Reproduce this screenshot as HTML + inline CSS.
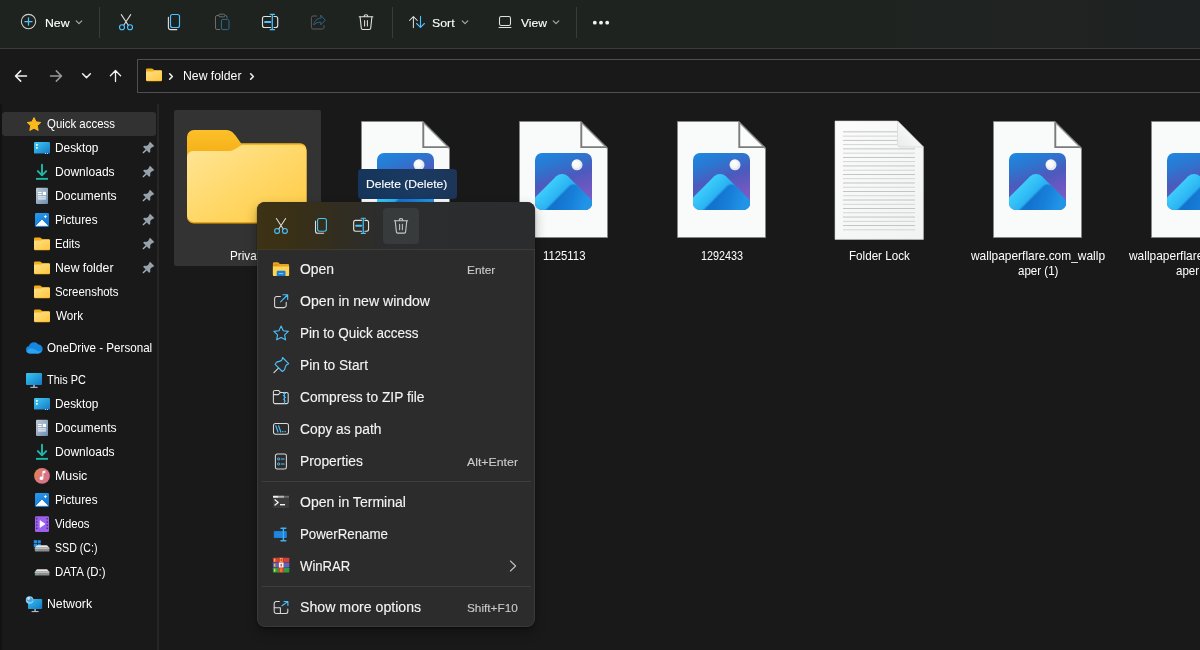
<!DOCTYPE html>
<html lang="en"><head><meta charset="utf-8"><title>New folder</title>
<style>
html,body{margin:0;padding:0}
body{width:1200px;height:650px;overflow:hidden;background:#191919;position:relative;font-family:"Liberation Sans",sans-serif;font-size:12px;color:#fff}
.g{display:contents}
.a,.t,svg{position:absolute}
.t{white-space:nowrap;line-height:20px;height:20px;transform-origin:0 50%}
svg{overflow:visible}
#toolbar{left:0;top:0;width:1200px;height:48px;background:linear-gradient(90deg,#1f2320 0%,#1f2320 70%,#1f2222 100%)}
#tbline{left:0;top:48px;width:1200px;height:1px;background:#3b3b3b}
.vsep{width:1px;top:7px;height:31px;background:#383b39}
#addr{left:137px;top:59px;width:1100px;height:32px;border:1px solid #4f4f4f;background:#191919}
#side{left:0;top:100px;width:158px;height:550px;background:#191919}
#sdiv{left:157px;top:104px;width:2px;height:546px;background:#262626}
#qa{left:2px;top:112px;width:154px;height:24px;background:#323232;border-radius:3px}
#ledge{left:0;top:104px;width:2px;height:546px;background:#121212}
#sel{left:174px;top:110px;width:147px;height:156px;background:#333;border-radius:2px}
#menu{left:257px;top:202px;width:278px;height:425px;border-radius:8px;background:#2c2c2c;box-shadow:0 0 0 1px rgba(255,255,255,.07) inset,0 5px 12px rgba(0,0,0,.3),0 1px 2px rgba(0,0,0,.45);overflow:hidden}
#mtop{left:0;top:0;width:278px;height:47px;background:linear-gradient(90deg,#3d3214 0%,#3a3016 12%,#312d21 30%,#2b2d2e 46%,#2b2c2d 100%)}
.msep{left:5px;width:269px;height:1px;background:#3e3e3e}
#delbtn{left:126px;top:6px;width:36px;height:36px;border-radius:4px;background:#383b3c}
#tip{left:358px;top:169px;width:99px;height:30px;border-radius:4px;background:linear-gradient(90deg,#16355a,#1a3a62 60%,#1c3558)}
#w{position:absolute;left:0;top:0;width:1200px;height:650px;will-change:transform}
</style></head><body><div id="w">

<header class="g" id="commandbar" aria-label="Command bar">
<div class="a" id="toolbar"></div><div class="a" id="tbline"></div>
<div class="g" role="button" aria-label="New"><svg class="a" style="left:16px;top:9px" width="24" height="24" viewBox="0 0 24 24"><g transform="translate(12.5 12.5)"><circle cx="0" cy="0" r="7.15" fill="none" stroke="#d2d2d2" stroke-width="1.05"/><path d="M-3.6 0 H3.6 M0 -3.6 V3.6" fill="none" stroke="#4cc2ff" stroke-width="1.25" stroke-linecap="round" stroke-linejoin="round" stroke-linecap="butt"/></g></svg><span class="t" id="t0" style="left:44.63px;top:12.80px;font-size:11.5px;color:#fff;transform:scaleX(1.0671);-webkit-text-stroke:0.12px currentColor;">New</span><svg class="a" style="left:71px;top:14px" width="16" height="16" viewBox="0 0 16 16"><g transform="translate(8 8.3)"><path d="M-2.8 -1.4 L0 1.4 L2.8 -1.4" fill="none" stroke="#a8a8a8" stroke-width="1.2" stroke-linecap="round" stroke-linejoin="round" /></g></svg></div>
<div class="a vsep" style="left:99px"></div>
<div class="g" role="button" aria-label="Cut"><svg class="a" style="left:114px;top:10px" width="24" height="24" viewBox="0 0 24 24"><g transform="translate(12 12)"><path d="M-4.7 -7.4 L2.3 3.2 M4.7 -7.4 L-2.3 3.2" fill="none" stroke="#dcdcdc" stroke-width="1.1" stroke-linecap="round" stroke-linejoin="round" /><circle cx="-4" cy="5.2" r="2.5" fill="none" stroke="#4cc2ff" stroke-width="1.15"/><circle cx="4" cy="5.2" r="2.5" fill="none" stroke="#4cc2ff" stroke-width="1.15"/></g></svg></div>
<div class="g" role="button" aria-label="Copy"><svg class="a" style="left:162px;top:10px" width="24" height="24" viewBox="0 0 24 24"><g transform="translate(12 12)"><path d="M-5.6 -4.8 V5.2 A2.4 2.4 0 0 0 -3.2 7.6 H2.8" fill="none" stroke="#e0e0e0" stroke-width="1.1" stroke-linecap="round" stroke-linejoin="round" /><rect x="-3.5" y="-7.5" width="9" height="13" rx="2" fill="none" stroke="#4cc2ff" stroke-width="1.15"/></g></svg></div>
<div class="g" role="button" aria-label="Paste" aria-disabled="true"><svg class="a" style="left:210px;top:10px" width="24" height="24" viewBox="0 0 24 24"><g transform="translate(12 12)"><path d="M-3.2 -6.5 H-5 A1.5 1.5 0 0 0 -6.5 -5 V6 A1.5 1.5 0 0 0 -5 7.5 H-2.2 M3.2 -6.5 H3.5 A1.5 1.5 0 0 1 5 -5 V-4" fill="none" stroke="#6b6b6b" stroke-width="1" stroke-linecap="round" stroke-linejoin="round" /><rect x="-3.4" y="-7.8" width="6.4" height="2.6" rx="1.3" fill="none" stroke="#6b6b6b" stroke-width="1"/><rect x="-0.6" y="-2.6" width="7.6" height="10.2" rx="1.5" fill="none" stroke="#2b6d96" stroke-width="1"/></g></svg></div>
<div class="g" role="button" aria-label="Rename"><svg class="a" style="left:258px;top:10px" width="24" height="24" viewBox="0 0 24 24"><g transform="translate(12 12)"><path d="M0.6 -5.5 H-5.5 A2 2 0 0 0 -7.5 -3.5 V3.5 A2 2 0 0 0 -5.5 5.5 H0.6 M4 -5.5 H5.7 A2 2 0 0 1 7.7 -3.5 V3.5 A2 2 0 0 1 5.7 5.5 H4" fill="none" stroke="#e0e0e0" stroke-width="1.15" stroke-linecap="round" stroke-linejoin="round" /><path d="M-5 0 H0.4" fill="none" stroke="#4cc2ff" stroke-width="1.9" stroke-linecap="round" stroke-linejoin="round" stroke-linecap="butt"/><path d="M2.3 -7.6 V7.6 M0.2 -7.7 H4.5 M0.2 7.7 H4.5" fill="none" stroke="#4cc2ff" stroke-width="1.25" stroke-linecap="round" stroke-linejoin="round" /></g></svg></div>
<div class="g" role="button" aria-label="Share" aria-disabled="true"><svg class="a" style="left:306px;top:10px" width="24" height="24" viewBox="0 0 24 24"><g transform="translate(12 12)"><path d="M-1.4 -6 H-5 A1.6 1.6 0 0 0 -6.6 -4.4 V5.4 A1.6 1.6 0 0 0 -5 7 H4.4 A1.6 1.6 0 0 0 6 5.4 V3.6" fill="none" stroke="#5c5c5c" stroke-width="1" stroke-linecap="round" stroke-linejoin="round" /><path d="M2.8 -6.6 L7.3 -1.8 L2.8 2.8 V0.2 C-0.8 0 -2.8 1.2 -4.2 3 C-3.8 -0.8 -1.4 -3.6 2.8 -4 Z" fill="none" stroke="#2a648c" stroke-width="1" stroke-linecap="round" stroke-linejoin="round" /></g></svg></div>
<div class="g" role="button" aria-label="Delete"><svg class="a" style="left:354px;top:10px" width="24" height="24" viewBox="0 0 24 24"><g transform="translate(12 12)"><path d="M-6.8 -5.2 H6.8 M-1.9 -5.4 A1.9 1.9 0 0 1 1.9 -5.4" fill="none" stroke="#e0e0e0" stroke-width="1.1" stroke-linecap="round" stroke-linejoin="round" /><path d="M-5.9 -5 L-4.7 6.2 A1.4 1.4 0 0 0 -3.3 7.5 H3.3 A1.4 1.4 0 0 0 4.7 6.2 L5.9 -5" fill="none" stroke="#e0e0e0" stroke-width="1.1" stroke-linecap="round" stroke-linejoin="round" /><path d="M-1.4 -1.6 V4 M1.4 -1.6 V4" fill="none" stroke="#e0e0e0" stroke-width="1.05" stroke-linecap="round" stroke-linejoin="round" /></g></svg></div>
<div class="a vsep" style="left:392px"></div>
<div class="g" role="button" aria-label="Sort"><svg class="a" style="left:405px;top:10px" width="24" height="24" viewBox="0 0 24 24"><g transform="translate(12 12)"><path d="M-3.6 5.6 V-5.2 M-7.5 -1.5 L-3.6 -5.4 L0.3 -1.5" fill="none" stroke="#dcdcdc" stroke-width="1.05" stroke-linecap="round" stroke-linejoin="round" /><path d="M3.5 -5.6 V5.2 M-0.4 1.5 L3.5 5.4 L7.4 1.5" fill="none" stroke="#4cc2ff" stroke-width="1.1" stroke-linecap="round" stroke-linejoin="round" /></g></svg><span class="t" id="t1" style="left:432.21px;top:12.80px;font-size:11.5px;color:#fff;transform:scaleX(1.0732);-webkit-text-stroke:0.12px currentColor;">Sort</span><svg class="a" style="left:457px;top:14px" width="16" height="16" viewBox="0 0 16 16"><g transform="translate(8 8.3)"><path d="M-2.8 -1.4 L0 1.4 L2.8 -1.4" fill="none" stroke="#a8a8a8" stroke-width="1.2" stroke-linecap="round" stroke-linejoin="round" /></g></svg></div>
<div class="g" role="button" aria-label="View"><svg class="a" style="left:493px;top:10px" width="24" height="24" viewBox="0 0 24 24"><g transform="translate(12 12)"><rect x="-5.5" y="-5.5" width="11" height="9" rx="1.8" fill="none" stroke="#e2e2e2" stroke-width="1.05"/><path d="M-6 5.5 H6" fill="none" stroke="#e2e2e2" stroke-width="1.05" stroke-linecap="round" stroke-linejoin="round" stroke-linecap="butt"/></g></svg><span class="t" id="t2" style="left:520.79px;top:12.80px;font-size:11.5px;color:#fff;transform:scaleX(1.0531);-webkit-text-stroke:0.12px currentColor;">View</span><svg class="a" style="left:548px;top:14px" width="16" height="16" viewBox="0 0 16 16"><g transform="translate(8 8.3)"><path d="M-2.8 -1.4 L0 1.4 L2.8 -1.4" fill="none" stroke="#a8a8a8" stroke-width="1.2" stroke-linecap="round" stroke-linejoin="round" /></g></svg></div>
<div class="a vsep" style="left:576px"></div>
<div class="g" role="button" aria-label="See more"><svg class="a" style="left:589px;top:10px" width="24" height="24" viewBox="0 0 24 24"><g transform="translate(12 12.7)"><circle cx="-6.2" cy="0" r="1.9" fill="#f4f4f4"/><circle cx="0" cy="0" r="1.9" fill="#f4f4f4"/><circle cx="6.2" cy="0" r="1.9" fill="#f4f4f4"/></g></svg></div>
</header>
<div class="g" id="navrow">
<div class="g" role="button" aria-label="Back"><svg class="a" style="left:9px;top:64px" width="24" height="24" viewBox="0 0 24 24"><g transform="translate(12 12)"><path d="M5.5 0 H-5.2 M-0.3 -5.1 L-5.5 0 L-0.3 5.1" fill="none" stroke="#f2f2f2" stroke-width="1.5" stroke-linecap="round" stroke-linejoin="round" /></g></svg></div>
<div class="g" role="button" aria-label="Forward" aria-disabled="true"><svg class="a" style="left:44px;top:64px" width="24" height="24" viewBox="0 0 24 24"><g transform="translate(12 12)"><path d="M-5.5 0 H5.2 M0.3 -5.1 L5.5 0 L0.3 5.1" fill="none" stroke="#9a9a9a" stroke-width="1.5" stroke-linecap="round" stroke-linejoin="round" /></g></svg></div>
<div class="g" role="button" aria-label="Recent locations"><svg class="a" style="left:78px;top:67px" width="16" height="16" viewBox="0 0 16 16"><g transform="translate(8.5 8.7)"><path d="M-3.9 -1.95 L0 1.95 L3.9 -1.95" fill="none" stroke="#ececec" stroke-width="1.5" stroke-linecap="round" stroke-linejoin="round" /></g></svg></div>
<div class="g" role="button" aria-label="Up"><svg class="a" style="left:103px;top:64px" width="24" height="24" viewBox="0 0 24 24"><g transform="translate(12.5 12)"><path d="M0 5.6 V-5.2 M-5.1 -0.3 L0 -5.5 L5.1 -0.3" fill="none" stroke="#f2f2f2" stroke-width="1.3" stroke-linecap="round" stroke-linejoin="round" /></g></svg></div>
<div class="a" id="addr"></div>
<div class="g" id="breadcrumb">
<svg class="a" style="left:146px;top:68px" width="16" height="14" viewBox="0 0 16 14"><defs><linearGradient id="fgFs_1" x1="0" y1="0" x2="1" y2="1"><stop offset="0" stop-color="#ffe08a"/><stop offset="1" stop-color="#ffc83d"/></linearGradient><linearGradient id="fgBs_1" x1="0" y1="0" x2="0" y2="1"><stop offset="0" stop-color="#fcbc19"/><stop offset="1" stop-color="#f0a90c"/></linearGradient></defs><path d="M0 1.6 A1.2 1.2 0 0 1 1.2 0.4 H5.6 C6.4 0.4 6.9 0.7 7.4 1.3 L8.1 2.2 H14.8 A1.2 1.2 0 0 1 16 3.4 V12 A1.2 1.2 0 0 1 14.8 13.2 H1.2 A1.2 1.2 0 0 1 0 12 Z" fill="#f2ad17"/><path d="M0 4.6 A1 1 0 0 1 1 3.6 H6.2 C6.9 3.6 7.3 3.4 7.8 2.9 L8.2 2.5 H14.9 A1.1 1.1 0 0 1 16 3.6 V11.6 A1.1 1.1 0 0 1 14.9 12.7 H1.1 A1.1 1.1 0 0 1 0 11.6 Z" fill="url(#fgFs_1)"/></svg>
<svg class="a" style="left:163px;top:68px" width="16" height="16" viewBox="0 0 16 16"><g transform="translate(8 8.5)"><path d="M-1.35 -2.7 L1.35 0 L-1.35 2.7" fill="none" stroke="#f0f0f0" stroke-width="1.6" stroke-linecap="round" stroke-linejoin="round" /></g></svg>
<span class="t" id="t3" style="left:182.78px;top:65.80px;font-size:13.0px;color:#fff;transform:scaleX(0.9411);">New folder</span>
<svg class="a" style="left:244px;top:68px" width="16" height="16" viewBox="0 0 16 16"><g transform="translate(8 8.5)"><path d="M-1.35 -2.7 L1.35 0 L-1.35 2.7" fill="none" stroke="#f0f0f0" stroke-width="1.6" stroke-linecap="round" stroke-linejoin="round" /></g></svg>
</div></div>
<nav class="g" id="sidebar" aria-label="Navigation pane">
<div class="a" id="sdiv"></div><div class="a" id="ledge"></div>
<div class="a" id="qa"></div>
<div class="g" role="treeitem" aria-level="1"><svg class="a" style="left:26px;top:116px" width="16" height="17" viewBox="0 0 16 17"><polygon points="8.00,1.60 10.06,5.87 14.75,6.51 11.33,9.78 12.17,14.44 8.00,12.20 3.83,14.44 4.67,9.78 1.25,6.51 5.94,5.87" fill="#fbb91b" stroke="#fbb91b" stroke-width="1" stroke-linejoin="round"/></svg><span class="t" id="t4" style="left:47.44px;top:113.80px;font-size:13.0px;color:#fff;transform:scaleX(0.8786);">Quick access</span></div>
<div class="g" role="treeitem" aria-level="2"><svg class="a" style="left:34px;top:140px" width="16" height="16" viewBox="0 0 16 16"><defs><linearGradient id="dg_3" x1="0" y1="0" x2="1" y2="1"><stop offset="0" stop-color="#3fcdf6"/><stop offset="1" stop-color="#1578c4"/></linearGradient></defs><rect x="0" y="2" width="16" height="11.6" rx="1.2" fill="url(#dg_3)"/><rect x="2" y="4" width="1.7" height="1.7" fill="#fff"/><rect x="2" y="7" width="1.7" height="1.7" fill="#fff"/><rect x="11" y="13" width="1" height="1" fill="#a8d8f0"/><rect x="13" y="13" width="1" height="1" fill="#a8d8f0"/></svg><span class="t" id="t5" style="left:54.58px;top:137.80px;font-size:13.0px;color:#fff;transform:scaleX(0.9103);">Desktop</span><svg class="a" style="left:142px;top:142px" width="13" height="14" viewBox="0 0 13 14"><g transform="rotate(45 6 6)"><path d="M3.2 0.2 H8.8 V1.6 L8.1 2.4 V5.2 L10.2 7.2 V8.5 H1.8 V7.2 L3.9 5.2 V2.4 L3.2 1.6 Z" fill="#98a2ae" stroke="#98a2ae" stroke-width="0.3" stroke-linejoin="round"/><path d="M5.3 8.4 H6.7 V12.8 L6 13.6 L5.3 12.8 Z" fill="#a8b0ba"/></g></svg></div>
<div class="g" role="treeitem" aria-level="2"><svg class="a" style="left:34px;top:164px" width="17" height="18" viewBox="0 0 17 18"><g transform="translate(0 0.1)"><path d="M8 0.6 V11 M3.8 7 L8 11.2 L12.2 7" fill="none" stroke="#1fb9a9" stroke-width="1.9" stroke-linecap="round" stroke-linejoin="round" stroke-linecap="butt" stroke-linejoin="miter"/><rect x="2" y="13.8" width="12" height="1.9" fill="#1fb9a9"/></g></svg><span class="t" id="t6" style="left:54.84px;top:161.80px;font-size:13.0px;color:#fff;transform:scaleX(0.9269);">Downloads</span><svg class="a" style="left:142px;top:166px" width="13" height="14" viewBox="0 0 13 14"><g transform="rotate(45 6 6)"><path d="M3.2 0.2 H8.8 V1.6 L8.1 2.4 V5.2 L10.2 7.2 V8.5 H1.8 V7.2 L3.9 5.2 V2.4 L3.2 1.6 Z" fill="#98a2ae" stroke="#98a2ae" stroke-width="0.3" stroke-linejoin="round"/><path d="M5.3 8.4 H6.7 V12.8 L6 13.6 L5.3 12.8 Z" fill="#a8b0ba"/></g></svg></div>
<div class="g" role="treeitem" aria-level="2"><svg class="a" style="left:34px;top:187px" width="17" height="18" viewBox="0 0 17 18"><g transform="translate(0 0.8)"><defs><linearGradient id="dcg_7" x1="0" y1="0" x2="1" y2="1"><stop offset="0" stop-color="#c3ccd6"/><stop offset="1" stop-color="#6a8db2"/></linearGradient></defs><rect x="2" y="0" width="12" height="16.2" rx="1" fill="url(#dcg_7)"/><rect x="4" y="4.2" width="3.6" height="1" fill="#fff"/><rect x="4" y="6.2" width="3.6" height="1" fill="#fff"/><rect x="8.8" y="4" width="3.2" height="3.2" fill="#fff"/><rect x="4" y="8.6" width="8" height="1" fill="#fff"/><rect x="4" y="10.6" width="8" height="1" fill="#fff"/></g></svg><span class="t" id="t7" style="left:54.84px;top:185.80px;font-size:13.0px;color:#fff;transform:scaleX(0.9388);">Documents</span><svg class="a" style="left:142px;top:190px" width="13" height="14" viewBox="0 0 13 14"><g transform="rotate(45 6 6)"><path d="M3.2 0.2 H8.8 V1.6 L8.1 2.4 V5.2 L10.2 7.2 V8.5 H1.8 V7.2 L3.9 5.2 V2.4 L3.2 1.6 Z" fill="#98a2ae" stroke="#98a2ae" stroke-width="0.3" stroke-linejoin="round"/><path d="M5.3 8.4 H6.7 V12.8 L6 13.6 L5.3 12.8 Z" fill="#a8b0ba"/></g></svg></div>
<div class="g" role="treeitem" aria-level="2"><svg class="a" style="left:34px;top:212px" width="16" height="16" viewBox="0 0 16 16"><defs><linearGradient id="pg_9" x1="0" y1="0" x2="0.6" y2="1"><stop offset="0" stop-color="#2a9df0"/><stop offset="1" stop-color="#1374cf"/></linearGradient></defs><rect x="1" y="1" width="14" height="14" rx="1.2" fill="url(#pg_9)"/><path d="M2.4 13.6 L8 8 L13.6 13.6 Z" fill="#fff" stroke="#fff" stroke-width="0.8" stroke-linejoin="round"/><path d="M11.4 2.8 L12 4 L13.2 4.6 L12 5.2 L11.4 6.4 L10.8 5.2 L9.6 4.6 L10.8 4 Z" fill="#fff"/></svg><span class="t" id="t8" style="left:54.78px;top:209.80px;font-size:13.0px;color:#fff;transform:scaleX(0.9053);">Pictures</span><svg class="a" style="left:142px;top:214px" width="13" height="14" viewBox="0 0 13 14"><g transform="rotate(45 6 6)"><path d="M3.2 0.2 H8.8 V1.6 L8.1 2.4 V5.2 L10.2 7.2 V8.5 H1.8 V7.2 L3.9 5.2 V2.4 L3.2 1.6 Z" fill="#98a2ae" stroke="#98a2ae" stroke-width="0.3" stroke-linejoin="round"/><path d="M5.3 8.4 H6.7 V12.8 L6 13.6 L5.3 12.8 Z" fill="#a8b0ba"/></g></svg></div>
<div class="g" role="treeitem" aria-level="2"><svg class="a" style="left:34px;top:237px" width="16" height="14" viewBox="0 0 16 14"><defs><linearGradient id="fgFs_11" x1="0" y1="0" x2="1" y2="1"><stop offset="0" stop-color="#ffe08a"/><stop offset="1" stop-color="#ffc83d"/></linearGradient><linearGradient id="fgBs_11" x1="0" y1="0" x2="0" y2="1"><stop offset="0" stop-color="#fcbc19"/><stop offset="1" stop-color="#f0a90c"/></linearGradient></defs><path d="M0 1.6 A1.2 1.2 0 0 1 1.2 0.4 H5.6 C6.4 0.4 6.9 0.7 7.4 1.3 L8.1 2.2 H14.8 A1.2 1.2 0 0 1 16 3.4 V12 A1.2 1.2 0 0 1 14.8 13.2 H1.2 A1.2 1.2 0 0 1 0 12 Z" fill="#f2ad17"/><path d="M0 4.6 A1 1 0 0 1 1 3.6 H6.2 C6.9 3.6 7.3 3.4 7.8 2.9 L8.2 2.5 H14.9 A1.1 1.1 0 0 1 16 3.6 V11.6 A1.1 1.1 0 0 1 14.9 12.7 H1.1 A1.1 1.1 0 0 1 0 11.6 Z" fill="url(#fgFs_11)"/></svg><span class="t" id="t9" style="left:54.78px;top:233.80px;font-size:13.0px;color:#fff;transform:scaleX(0.8707);">Edits</span><svg class="a" style="left:142px;top:238px" width="13" height="14" viewBox="0 0 13 14"><g transform="rotate(45 6 6)"><path d="M3.2 0.2 H8.8 V1.6 L8.1 2.4 V5.2 L10.2 7.2 V8.5 H1.8 V7.2 L3.9 5.2 V2.4 L3.2 1.6 Z" fill="#98a2ae" stroke="#98a2ae" stroke-width="0.3" stroke-linejoin="round"/><path d="M5.3 8.4 H6.7 V12.8 L6 13.6 L5.3 12.8 Z" fill="#a8b0ba"/></g></svg></div>
<div class="g" role="treeitem" aria-level="2"><svg class="a" style="left:34px;top:261px" width="16" height="14" viewBox="0 0 16 14"><defs><linearGradient id="fgFs_13" x1="0" y1="0" x2="1" y2="1"><stop offset="0" stop-color="#ffe08a"/><stop offset="1" stop-color="#ffc83d"/></linearGradient><linearGradient id="fgBs_13" x1="0" y1="0" x2="0" y2="1"><stop offset="0" stop-color="#fcbc19"/><stop offset="1" stop-color="#f0a90c"/></linearGradient></defs><path d="M0 1.6 A1.2 1.2 0 0 1 1.2 0.4 H5.6 C6.4 0.4 6.9 0.7 7.4 1.3 L8.1 2.2 H14.8 A1.2 1.2 0 0 1 16 3.4 V12 A1.2 1.2 0 0 1 14.8 13.2 H1.2 A1.2 1.2 0 0 1 0 12 Z" fill="#f2ad17"/><path d="M0 4.6 A1 1 0 0 1 1 3.6 H6.2 C6.9 3.6 7.3 3.4 7.8 2.9 L8.2 2.5 H14.9 A1.1 1.1 0 0 1 16 3.6 V11.6 A1.1 1.1 0 0 1 14.9 12.7 H1.1 A1.1 1.1 0 0 1 0 11.6 Z" fill="url(#fgFs_13)"/></svg><span class="t" id="t10" style="left:54.78px;top:257.80px;font-size:13.0px;color:#fff;transform:scaleX(0.9411);">New folder</span><svg class="a" style="left:142px;top:262px" width="13" height="14" viewBox="0 0 13 14"><g transform="rotate(45 6 6)"><path d="M3.2 0.2 H8.8 V1.6 L8.1 2.4 V5.2 L10.2 7.2 V8.5 H1.8 V7.2 L3.9 5.2 V2.4 L3.2 1.6 Z" fill="#98a2ae" stroke="#98a2ae" stroke-width="0.3" stroke-linejoin="round"/><path d="M5.3 8.4 H6.7 V12.8 L6 13.6 L5.3 12.8 Z" fill="#a8b0ba"/></g></svg></div>
<div class="g" role="treeitem" aria-level="2"><svg class="a" style="left:34px;top:285px" width="16" height="14" viewBox="0 0 16 14"><defs><linearGradient id="fgFs_15" x1="0" y1="0" x2="1" y2="1"><stop offset="0" stop-color="#ffe08a"/><stop offset="1" stop-color="#ffc83d"/></linearGradient><linearGradient id="fgBs_15" x1="0" y1="0" x2="0" y2="1"><stop offset="0" stop-color="#fcbc19"/><stop offset="1" stop-color="#f0a90c"/></linearGradient></defs><path d="M0 1.6 A1.2 1.2 0 0 1 1.2 0.4 H5.6 C6.4 0.4 6.9 0.7 7.4 1.3 L8.1 2.2 H14.8 A1.2 1.2 0 0 1 16 3.4 V12 A1.2 1.2 0 0 1 14.8 13.2 H1.2 A1.2 1.2 0 0 1 0 12 Z" fill="#f2ad17"/><path d="M0 4.6 A1 1 0 0 1 1 3.6 H6.2 C6.9 3.6 7.3 3.4 7.8 2.9 L8.2 2.5 H14.9 A1.1 1.1 0 0 1 16 3.6 V11.6 A1.1 1.1 0 0 1 14.9 12.7 H1.1 A1.1 1.1 0 0 1 0 11.6 Z" fill="url(#fgFs_15)"/></svg><span class="t" id="t11" style="left:54.60px;top:281.80px;font-size:13.0px;color:#fff;transform:scaleX(0.8781);">Screenshots</span></div>
<div class="g" role="treeitem" aria-level="2"><svg class="a" style="left:34px;top:309px" width="16" height="14" viewBox="0 0 16 14"><defs><linearGradient id="fgFs_16" x1="0" y1="0" x2="1" y2="1"><stop offset="0" stop-color="#ffe08a"/><stop offset="1" stop-color="#ffc83d"/></linearGradient><linearGradient id="fgBs_16" x1="0" y1="0" x2="0" y2="1"><stop offset="0" stop-color="#fcbc19"/><stop offset="1" stop-color="#f0a90c"/></linearGradient></defs><path d="M0 1.6 A1.2 1.2 0 0 1 1.2 0.4 H5.6 C6.4 0.4 6.9 0.7 7.4 1.3 L8.1 2.2 H14.8 A1.2 1.2 0 0 1 16 3.4 V12 A1.2 1.2 0 0 1 14.8 13.2 H1.2 A1.2 1.2 0 0 1 0 12 Z" fill="#f2ad17"/><path d="M0 4.6 A1 1 0 0 1 1 3.6 H6.2 C6.9 3.6 7.3 3.4 7.8 2.9 L8.2 2.5 H14.9 A1.1 1.1 0 0 1 16 3.6 V11.6 A1.1 1.1 0 0 1 14.9 12.7 H1.1 A1.1 1.1 0 0 1 0 11.6 Z" fill="url(#fgFs_16)"/></svg><span class="t" id="t12" style="left:55.71px;top:305.80px;font-size:13.0px;color:#fff;transform:scaleX(0.9008);">Work</span></div>
<div class="g" role="treeitem" aria-level="1"><svg class="a" style="left:25px;top:338px" width="18" height="17" viewBox="0 0 18 17"><g transform="translate(0.8 0.4)"><path d="M3.8 15 A3.8 3.8 0 0 1 3.2 7.5 A5.2 5.2 0 0 1 12.6 6.2 A4.4 4.4 0 0 1 12.4 15 Z" fill="#1487e0"/><path d="M0.8 12.8 C2 10 5 9.2 7.6 10.4 L13 13.2 L15.8 12.2 A4.4 4.4 0 0 1 12.4 15 H3.8 A3.8 3.8 0 0 1 0.8 12.8 Z" fill="#2ba3f0"/></g></svg><span class="t" id="t13" style="left:47.34px;top:337.80px;font-size:13.0px;color:#fff;transform:scaleX(0.8932);">OneDrive - Personal</span></div>
<div class="g" role="treeitem" aria-level="1"><svg class="a" style="left:26px;top:372px" width="16" height="17" viewBox="0 0 16 17"><defs><linearGradient id="pcg_18" x1="0" y1="0" x2="1" y2="1"><stop offset="0" stop-color="#37c8ee"/><stop offset="1" stop-color="#1478c8"/></linearGradient></defs><rect x="0" y="1" width="16" height="12" rx="1" fill="url(#pcg_18)"/><rect x="7" y="13" width="2" height="2" fill="#8aa0b0"/><rect x="4.4" y="14.8" width="7.2" height="1.2" fill="#9fb2c0"/></svg><span class="t" id="t14" style="left:47.48px;top:369.80px;font-size:13.0px;color:#fff;transform:scaleX(0.8401);">This PC</span></div>
<div class="g" role="treeitem" aria-level="2"><svg class="a" style="left:34px;top:396px" width="16" height="16" viewBox="0 0 16 16"><defs><linearGradient id="dg_19" x1="0" y1="0" x2="1" y2="1"><stop offset="0" stop-color="#3fcdf6"/><stop offset="1" stop-color="#1578c4"/></linearGradient></defs><rect x="0" y="2" width="16" height="11.6" rx="1.2" fill="url(#dg_19)"/><rect x="2" y="4" width="1.7" height="1.7" fill="#fff"/><rect x="2" y="7" width="1.7" height="1.7" fill="#fff"/><rect x="11" y="13" width="1" height="1" fill="#a8d8f0"/><rect x="13" y="13" width="1" height="1" fill="#a8d8f0"/></svg><span class="t" id="t15" style="left:54.58px;top:393.80px;font-size:13.0px;color:#fff;transform:scaleX(0.9103);">Desktop</span></div>
<div class="g" role="treeitem" aria-level="2"><svg class="a" style="left:34px;top:419px" width="17" height="18" viewBox="0 0 17 18"><g transform="translate(0 0.8)"><defs><linearGradient id="dcg_20" x1="0" y1="0" x2="1" y2="1"><stop offset="0" stop-color="#c3ccd6"/><stop offset="1" stop-color="#6a8db2"/></linearGradient></defs><rect x="2" y="0" width="12" height="16.2" rx="1" fill="url(#dcg_20)"/><rect x="4" y="4.2" width="3.6" height="1" fill="#fff"/><rect x="4" y="6.2" width="3.6" height="1" fill="#fff"/><rect x="8.8" y="4" width="3.2" height="3.2" fill="#fff"/><rect x="4" y="8.6" width="8" height="1" fill="#fff"/><rect x="4" y="10.6" width="8" height="1" fill="#fff"/></g></svg><span class="t" id="t16" style="left:54.84px;top:417.80px;font-size:13.0px;color:#fff;transform:scaleX(0.9388);">Documents</span></div>
<div class="g" role="treeitem" aria-level="2"><svg class="a" style="left:34px;top:444px" width="17" height="18" viewBox="0 0 17 18"><g transform="translate(0 0.1)"><path d="M8 0.6 V11 M3.8 7 L8 11.2 L12.2 7" fill="none" stroke="#1fb9a9" stroke-width="1.9" stroke-linecap="round" stroke-linejoin="round" stroke-linecap="butt" stroke-linejoin="miter"/><rect x="2" y="13.8" width="12" height="1.9" fill="#1fb9a9"/></g></svg><span class="t" id="t17" style="left:54.84px;top:441.80px;font-size:13.0px;color:#fff;transform:scaleX(0.9269);">Downloads</span></div>
<div class="g" role="treeitem" aria-level="2"><svg class="a" style="left:34px;top:467px" width="17" height="17" viewBox="0 0 17 17"><g transform="translate(0 0.8)"><defs><linearGradient id="mg_22" x1="0" y1="0.3" x2="1" y2="0.7"><stop offset="0" stop-color="#e3863f"/><stop offset="0.35" stop-color="#dc787a"/><stop offset="1" stop-color="#d6728a"/></linearGradient></defs><circle cx="8" cy="8" r="7.9" fill="url(#mg_22)"/><path d="M8.4 3.4 L11.4 2.8 V5 L9.4 5.4 V10.4 A1.9 1.7 0 1 1 8.4 9 Z" fill="#fff"/></g></svg><span class="t" id="t18" style="left:54.68px;top:465.80px;font-size:13.0px;color:#fff;transform:scaleX(0.9518);">Music</span></div>
<div class="g" role="treeitem" aria-level="2"><svg class="a" style="left:34px;top:492px" width="16" height="16" viewBox="0 0 16 16"><defs><linearGradient id="pg_23" x1="0" y1="0" x2="0.6" y2="1"><stop offset="0" stop-color="#2a9df0"/><stop offset="1" stop-color="#1374cf"/></linearGradient></defs><rect x="1" y="1" width="14" height="14" rx="1.2" fill="url(#pg_23)"/><path d="M2.4 13.6 L8 8 L13.6 13.6 Z" fill="#fff" stroke="#fff" stroke-width="0.8" stroke-linejoin="round"/><path d="M11.4 2.8 L12 4 L13.2 4.6 L12 5.2 L11.4 6.4 L10.8 5.2 L9.6 4.6 L10.8 4 Z" fill="#fff"/></svg><span class="t" id="t19" style="left:54.78px;top:489.80px;font-size:13.0px;color:#fff;transform:scaleX(0.9053);">Pictures</span></div>
<div class="g" role="treeitem" aria-level="2"><svg class="a" style="left:34px;top:516px" width="16" height="16" viewBox="0 0 16 16"><rect x="1" y="0.2" width="14" height="15.8" rx="1.2" fill="#9c5fee"/><rect x="2" y="2" width="1.5" height="1.5" rx="0.4" fill="#4a2c8c"/><rect x="2" y="5.2" width="1.5" height="1.5" rx="0.4" fill="#4a2c8c"/><rect x="2" y="8.4" width="1.5" height="1.5" rx="0.4" fill="#4a2c8c"/><rect x="2" y="11.6" width="1.5" height="1.5" rx="0.4" fill="#4a2c8c"/><rect x="12.5" y="2" width="1.5" height="1.5" rx="0.4" fill="#4a2c8c"/><rect x="12.5" y="5.2" width="1.5" height="1.5" rx="0.4" fill="#4a2c8c"/><rect x="12.5" y="8.4" width="1.5" height="1.5" rx="0.4" fill="#4a2c8c"/><rect x="12.5" y="11.6" width="1.5" height="1.5" rx="0.4" fill="#4a2c8c"/><path d="M6 4.6 L11 8 L6 11.4 Z" fill="#fff" stroke="#fff" stroke-width="0.6" stroke-linejoin="round"/></svg><span class="t" id="t20" style="left:55.07px;top:513.80px;font-size:13.0px;color:#fff;transform:scaleX(0.8725);">Videos</span></div>
<div class="g" role="treeitem" aria-level="2"><svg class="a" style="left:34px;top:540px" width="17" height="17" viewBox="0 0 17 17"><g transform="translate(0 0.2)"><rect x="-0.2" y="0" width="3.2" height="3.2" fill="#1e90ea"/><rect x="-0.2" y="3.8" width="3.2" height="3.2" fill="#1e90ea"/><rect x="3.6" y="0" width="3.2" height="3.2" fill="#1e90ea"/><rect x="3.6" y="3.8" width="3.2" height="3.2" fill="#1e90ea"/><path d="M3 5 H13 L15.4 7.6 H0.8 Z" fill="#e9e9e9"/><rect x="0.8" y="7.6" width="14.6" height="3.8" rx="0.6" fill="#8c8c8c"/><rect x="0.8" y="7.6" width="14.6" height="1" fill="#c9c9c9"/><rect x="2.6" y="9.4" width="1.6" height="1" fill="#35e0e8"/></g></svg><span class="t" id="t21" style="left:54.70px;top:537.80px;font-size:13.0px;color:#fff;transform:scaleX(0.8168);">SSD (C:)</span></div>
<div class="g" role="treeitem" aria-level="2"><svg class="a" style="left:34px;top:564px" width="16" height="16" viewBox="0 0 16 16"><path d="M3 5.2 H13 L15.4 7.800000000000001 H0.8 Z" fill="#e9e9e9"/><rect x="0.8" y="7.800000000000001" width="14.6" height="3.8" rx="0.6" fill="#8c8c8c"/><rect x="0.8" y="7.800000000000001" width="14.6" height="1" fill="#c9c9c9"/><rect x="2.6" y="9.600000000000001" width="1.6" height="1" fill="#35e0e8"/></svg><span class="t" id="t22" style="left:54.78px;top:561.80px;font-size:13.0px;color:#fff;transform:scaleX(0.8813);">DATA (D:)</span></div>
<div class="g" role="treeitem" aria-level="1"><svg class="a" style="left:26px;top:596px" width="17" height="17" viewBox="0 0 17 17"><defs><linearGradient id="ng_27" x1="0" y1="0" x2="1" y2="1"><stop offset="0" stop-color="#35c2ee"/><stop offset="1" stop-color="#1478c8"/></linearGradient></defs><rect x="2" y="3" width="14.2" height="10" rx="0.8" fill="url(#ng_27)"/><rect x="8.2" y="13" width="1.8" height="2.2" fill="#8aa0b0"/><rect x="5.6" y="15" width="7" height="1.1" fill="#aebcc8"/><circle cx="3.6" cy="4" r="3.8" fill="#8fd0f4"/><path d="M1 2.6 C2.4 1.6 3.6 2.6 4.6 1.6 C5.6 2 6.6 3 7 4.4 C6 5 5.4 6.4 4 6.6 C3 5.6 1.6 5.6 0.6 4.6 Z" fill="#3d9be0" opacity="0.85"/><circle cx="2.6" cy="2.6" r="1.3" fill="#d8f0fc" opacity="0.9"/></svg><span class="t" id="t23" style="left:46.58px;top:593.80px;font-size:13.0px;color:#fff;transform:scaleX(0.9443);">Network</span></div>
</nav>
<main class="g" id="files" aria-label="Items view">
<div class="g" role="option" aria-selected="true"><div class="a" id="sel"></div><svg class="a" style="left:187px;top:130px" width="120" height="94" viewBox="0 0 120 94"><defs><linearGradient id="bfF_28" x1="0" y1="0" x2="1" y2="1"><stop offset="0" stop-color="#ffe596"/><stop offset="0.5" stop-color="#ffd869"/><stop offset="1" stop-color="#ffcb42"/></linearGradient><linearGradient id="bfB_28" x1="0" y1="0" x2="0" y2="1"><stop offset="0" stop-color="#fcc02a"/><stop offset="0.3" stop-color="#f4ad14"/><stop offset="1" stop-color="#f3ab12"/></linearGradient></defs><path d="M0 7 A7 7 0 0 1 7 0 H38 C43 0 45.5 1.6 48.5 5.6 L54 13.2 H113 A6.5 6.5 0 0 1 119.5 19.7 V86 A7 7 0 0 1 112.5 93 H7 A7 7 0 0 1 0 86 Z" fill="url(#bfB_28)"/><path d="M0 27 A6 6 0 0 1 6 21 H40 C44 21 46.5 20.4 49.5 18.2 L53 16 C54 15.4 55 15.1 56.5 15.1 H113.5 A6 6 0 0 1 119.5 21.1 V85.5 A6.5 6.5 0 0 1 113 92 H6.5 A6.5 6.5 0 0 1 0 85.5 Z" fill="url(#bfF_28)"/><path d="M0 85 V86 A7 7 0 0 0 7 93.6 H112.5 A7 7 0 0 0 119.5 86 V85 A6.5 6.5 0 0 1 113 92 H6.5 A6.5 6.5 0 0 1 0 85 Z" fill="#eaa514"/></svg><span class="t" id="t24" style="left:229.50px;top:245.80px;font-size:13.0px;color:#fff;transform:scaleX(0.8995);">Private</span></div>
<div class="g" role="option"><svg class="a" style="left:361px;top:121px" width="90" height="118" viewBox="0 0 90 118"><g transform="translate(0.5 0.5)"><path d="M0 0 H61 L88 27 V116 H0 Z" fill="#f9fafa" stroke="#868686" stroke-width="1" stroke-linejoin="miter"/><path d="M61.8 0.8 V25.6 H87" fill="#fbfcfc" stroke="#7b7b7b" stroke-width="1.9" stroke-linejoin="miter"/><path d="M61 0 L88 27" fill="none" stroke="#8a8a8a" stroke-width="1.5"/><defs><linearGradient id="ph1_29" x1="0" y1="0" x2="0.354" y2="1.008"><stop offset="0" stop-color="#1c8ae2"/><stop offset="0.28" stop-color="#2c76d0"/><stop offset="0.55" stop-color="#4c5abd"/><stop offset="0.85" stop-color="#7058c2"/><stop offset="1" stop-color="#7a5cc6"/></linearGradient><linearGradient id="pm1_29" gradientUnits="userSpaceOnUse" x1="10" y1="30" x2="26" y2="46"><stop offset="0" stop-color="#40d2fd"/><stop offset="0.6" stop-color="#30bbf5"/><stop offset="1" stop-color="#27a8ee"/></linearGradient><linearGradient id="pn1_29" gradientUnits="userSpaceOnUse" x1="24" y1="44" x2="50" y2="52"><stop offset="0" stop-color="#1374cf"/><stop offset="0.5" stop-color="#1880da"/><stop offset="1" stop-color="#2194e6"/></linearGradient><clipPath id="pc1_29"><rect x="15.5" y="31.5" width="57" height="57" rx="7"/></clipPath></defs><g clip-path="url(#pc1_29)"><rect x="15.5" y="31.5" width="57" height="57" fill="url(#ph1_29)"/><g transform="translate(15.5 31.5)"><path d="M-2 46.5 L21.2 23.3 A8.3 8.3 0 0 1 32.9 23.3 L60 50.4 V60 H-2 Z" fill="url(#pm1_29)"/><path d="M6.4 60 L33.6 32.8 A6 6 0 0 1 42 32.6 L60 50.4 V60 Z" fill="#1260b4" opacity="0.3"/><path d="M8.2 60 L34.7 33.5 A6 6 0 0 1 43.1 33.5 L60 50.4 V60 Z" fill="url(#pn1_29)"/><circle cx="42" cy="11.8" r="5.5" fill="#e6e7ec"/><circle cx="41.3" cy="11" r="4.2" fill="#f6f6f8"/><circle cx="40.8" cy="10.6" r="2.6" fill="#fdfdfe"/></g></g></g></svg></div>
<div class="g" role="option"><svg class="a" style="left:519px;top:121px" width="90" height="118" viewBox="0 0 90 118"><g transform="translate(0.5 0.5)"><path d="M0 0 H61 L88 27 V116 H0 Z" fill="#f9fafa" stroke="#868686" stroke-width="1" stroke-linejoin="miter"/><path d="M61.8 0.8 V25.6 H87" fill="#fbfcfc" stroke="#7b7b7b" stroke-width="1.9" stroke-linejoin="miter"/><path d="M61 0 L88 27" fill="none" stroke="#8a8a8a" stroke-width="1.5"/><defs><linearGradient id="ph2_30" x1="0" y1="0" x2="0.354" y2="1.008"><stop offset="0" stop-color="#1c8ae2"/><stop offset="0.28" stop-color="#2c76d0"/><stop offset="0.55" stop-color="#4c5abd"/><stop offset="0.85" stop-color="#7058c2"/><stop offset="1" stop-color="#7a5cc6"/></linearGradient><linearGradient id="pm2_30" gradientUnits="userSpaceOnUse" x1="10" y1="30" x2="26" y2="46"><stop offset="0" stop-color="#40d2fd"/><stop offset="0.6" stop-color="#30bbf5"/><stop offset="1" stop-color="#27a8ee"/></linearGradient><linearGradient id="pn2_30" gradientUnits="userSpaceOnUse" x1="24" y1="44" x2="50" y2="52"><stop offset="0" stop-color="#1374cf"/><stop offset="0.5" stop-color="#1880da"/><stop offset="1" stop-color="#2194e6"/></linearGradient><clipPath id="pc2_30"><rect x="15.5" y="31.5" width="57" height="57" rx="7"/></clipPath></defs><g clip-path="url(#pc2_30)"><rect x="15.5" y="31.5" width="57" height="57" fill="url(#ph2_30)"/><g transform="translate(15.5 31.5)"><path d="M-2 46.5 L21.2 23.3 A8.3 8.3 0 0 1 32.9 23.3 L60 50.4 V60 H-2 Z" fill="url(#pm2_30)"/><path d="M6.4 60 L33.6 32.8 A6 6 0 0 1 42 32.6 L60 50.4 V60 Z" fill="#1260b4" opacity="0.3"/><path d="M8.2 60 L34.7 33.5 A6 6 0 0 1 43.1 33.5 L60 50.4 V60 Z" fill="url(#pn2_30)"/><circle cx="42" cy="11.8" r="5.5" fill="#e6e7ec"/><circle cx="41.3" cy="11" r="4.2" fill="#f6f6f8"/><circle cx="40.8" cy="10.6" r="2.6" fill="#fdfdfe"/></g></g></g></svg><span class="t" id="t25" style="left:542.59px;top:245.80px;font-size:13.0px;color:#fff;transform:scaleX(0.8718);">1125113</span></div>
<div class="g" role="option"><svg class="a" style="left:677px;top:121px" width="90" height="118" viewBox="0 0 90 118"><g transform="translate(0.5 0.5)"><path d="M0 0 H61 L88 27 V116 H0 Z" fill="#f9fafa" stroke="#868686" stroke-width="1" stroke-linejoin="miter"/><path d="M61.8 0.8 V25.6 H87" fill="#fbfcfc" stroke="#7b7b7b" stroke-width="1.9" stroke-linejoin="miter"/><path d="M61 0 L88 27" fill="none" stroke="#8a8a8a" stroke-width="1.5"/><defs><linearGradient id="ph3_31" x1="0" y1="0" x2="0.354" y2="1.008"><stop offset="0" stop-color="#1c8ae2"/><stop offset="0.28" stop-color="#2c76d0"/><stop offset="0.55" stop-color="#4c5abd"/><stop offset="0.85" stop-color="#7058c2"/><stop offset="1" stop-color="#7a5cc6"/></linearGradient><linearGradient id="pm3_31" gradientUnits="userSpaceOnUse" x1="10" y1="30" x2="26" y2="46"><stop offset="0" stop-color="#40d2fd"/><stop offset="0.6" stop-color="#30bbf5"/><stop offset="1" stop-color="#27a8ee"/></linearGradient><linearGradient id="pn3_31" gradientUnits="userSpaceOnUse" x1="24" y1="44" x2="50" y2="52"><stop offset="0" stop-color="#1374cf"/><stop offset="0.5" stop-color="#1880da"/><stop offset="1" stop-color="#2194e6"/></linearGradient><clipPath id="pc3_31"><rect x="15.5" y="31.5" width="57" height="57" rx="7"/></clipPath></defs><g clip-path="url(#pc3_31)"><rect x="15.5" y="31.5" width="57" height="57" fill="url(#ph3_31)"/><g transform="translate(15.5 31.5)"><path d="M-2 46.5 L21.2 23.3 A8.3 8.3 0 0 1 32.9 23.3 L60 50.4 V60 H-2 Z" fill="url(#pm3_31)"/><path d="M6.4 60 L33.6 32.8 A6 6 0 0 1 42 32.6 L60 50.4 V60 Z" fill="#1260b4" opacity="0.3"/><path d="M8.2 60 L34.7 33.5 A6 6 0 0 1 43.1 33.5 L60 50.4 V60 Z" fill="url(#pn3_31)"/><circle cx="42" cy="11.8" r="5.5" fill="#e6e7ec"/><circle cx="41.3" cy="11" r="4.2" fill="#f6f6f8"/><circle cx="40.8" cy="10.6" r="2.6" fill="#fdfdfe"/></g></g></g></svg><span class="t" id="t26" style="left:700.63px;top:245.80px;font-size:13.0px;color:#fff;transform:scaleX(0.8319);">1292433</span></div>
<div class="g" role="option"><svg class="a" style="left:835px;top:121px" width="89" height="119" viewBox="0 0 89 119"><defs><linearGradient id="tf4_32" x1="0" y1="0" x2="1" y2="1"><stop offset="0" stop-color="#fcfcfc"/><stop offset="1" stop-color="#f1f2f2"/></linearGradient><linearGradient id="tc4_32" x1="0" y1="1" x2="1" y2="0"><stop offset="0" stop-color="#e9eaea"/><stop offset="0.5" stop-color="#f6f6f6"/><stop offset="1" stop-color="#dcdddd"/></linearGradient></defs><path d="M0 0 H62.5 L88.4 26 V118.4 H0 Z" fill="url(#tf4_32)" stroke="#d0d0d0" stroke-width="0.6"/><rect x="8" y="10.40" width="54" height="0.9" fill="#bcbebf"/><rect x="8" y="14.66" width="54" height="0.9" fill="#cfd1d2"/><rect x="8" y="18.92" width="54" height="0.9" fill="#bcbebf"/><rect x="8" y="23.18" width="54" height="0.9" fill="#cfd1d2"/><rect x="8" y="27.44" width="72" height="0.9" fill="#bcbebf"/><rect x="8" y="31.70" width="72" height="0.9" fill="#cfd1d2"/><rect x="8" y="35.96" width="72" height="0.9" fill="#bcbebf"/><rect x="8" y="40.22" width="72" height="0.9" fill="#cfd1d2"/><rect x="8" y="44.48" width="72" height="0.9" fill="#bcbebf"/><rect x="8" y="48.74" width="72" height="0.9" fill="#cfd1d2"/><rect x="8" y="53.00" width="72" height="0.9" fill="#bcbebf"/><rect x="8" y="57.26" width="72" height="0.9" fill="#cfd1d2"/><rect x="8" y="61.52" width="72" height="0.9" fill="#bcbebf"/><rect x="8" y="65.78" width="72" height="0.9" fill="#cfd1d2"/><rect x="8" y="70.04" width="72" height="0.9" fill="#bcbebf"/><rect x="8" y="74.30" width="72" height="0.9" fill="#cfd1d2"/><rect x="8" y="78.56" width="72" height="0.9" fill="#bcbebf"/><rect x="8" y="82.82" width="72" height="0.9" fill="#cfd1d2"/><rect x="8" y="87.08" width="72" height="0.9" fill="#bcbebf"/><rect x="8" y="91.34" width="72" height="0.9" fill="#cfd1d2"/><rect x="8" y="95.60" width="72" height="0.9" fill="#bcbebf"/><rect x="8" y="99.86" width="72" height="0.9" fill="#cfd1d2"/><rect x="8" y="104.12" width="72" height="0.9" fill="#bcbebf"/><rect x="8" y="108.38" width="72" height="0.9" fill="#cfd1d2"/><path d="M62.5 0 L88.4 26 H65 A2.5 2.5 0 0 1 62.5 23.5 Z" fill="url(#tc4_32)" stroke="#cfd0d0" stroke-width="0.6"/></svg><span class="t" id="t27" style="left:848.50px;top:245.80px;font-size:13.0px;color:#fff;transform:scaleX(0.8956);">Folder Lock</span></div>
<div class="g" role="option"><svg class="a" style="left:993px;top:121px" width="90" height="118" viewBox="0 0 90 118"><g transform="translate(0.5 0.5)"><path d="M0 0 H61 L88 27 V116 H0 Z" fill="#f9fafa" stroke="#868686" stroke-width="1" stroke-linejoin="miter"/><path d="M61.8 0.8 V25.6 H87" fill="#fbfcfc" stroke="#7b7b7b" stroke-width="1.9" stroke-linejoin="miter"/><path d="M61 0 L88 27" fill="none" stroke="#8a8a8a" stroke-width="1.5"/><defs><linearGradient id="ph5_33" x1="0" y1="0" x2="0.354" y2="1.008"><stop offset="0" stop-color="#1c8ae2"/><stop offset="0.28" stop-color="#2c76d0"/><stop offset="0.55" stop-color="#4c5abd"/><stop offset="0.85" stop-color="#7058c2"/><stop offset="1" stop-color="#7a5cc6"/></linearGradient><linearGradient id="pm5_33" gradientUnits="userSpaceOnUse" x1="10" y1="30" x2="26" y2="46"><stop offset="0" stop-color="#40d2fd"/><stop offset="0.6" stop-color="#30bbf5"/><stop offset="1" stop-color="#27a8ee"/></linearGradient><linearGradient id="pn5_33" gradientUnits="userSpaceOnUse" x1="24" y1="44" x2="50" y2="52"><stop offset="0" stop-color="#1374cf"/><stop offset="0.5" stop-color="#1880da"/><stop offset="1" stop-color="#2194e6"/></linearGradient><clipPath id="pc5_33"><rect x="15.5" y="31.5" width="57" height="57" rx="7"/></clipPath></defs><g clip-path="url(#pc5_33)"><rect x="15.5" y="31.5" width="57" height="57" fill="url(#ph5_33)"/><g transform="translate(15.5 31.5)"><path d="M-2 46.5 L21.2 23.3 A8.3 8.3 0 0 1 32.9 23.3 L60 50.4 V60 H-2 Z" fill="url(#pm5_33)"/><path d="M6.4 60 L33.6 32.8 A6 6 0 0 1 42 32.6 L60 50.4 V60 Z" fill="#1260b4" opacity="0.3"/><path d="M8.2 60 L34.7 33.5 A6 6 0 0 1 43.1 33.5 L60 50.4 V60 Z" fill="url(#pn5_33)"/><circle cx="42" cy="11.8" r="5.5" fill="#e6e7ec"/><circle cx="41.3" cy="11" r="4.2" fill="#f6f6f8"/><circle cx="40.8" cy="10.6" r="2.6" fill="#fdfdfe"/></g></g></g></svg><span class="t" id="t28" style="left:970.76px;top:245.80px;font-size:13.0px;color:#fff;transform:scaleX(0.9182);">wallpaperflare.com_wallp</span><span class="t" id="t29" style="left:1017.93px;top:260.80px;font-size:13.0px;color:#fff;transform:scaleX(0.8886);">aper (1)</span></div>
<div class="g" role="option"><svg class="a" style="left:1151px;top:121px" width="90" height="118" viewBox="0 0 90 118"><g transform="translate(0.5 0.5)"><path d="M0 0 H61 L88 27 V116 H0 Z" fill="#f9fafa" stroke="#868686" stroke-width="1" stroke-linejoin="miter"/><path d="M61.8 0.8 V25.6 H87" fill="#fbfcfc" stroke="#7b7b7b" stroke-width="1.9" stroke-linejoin="miter"/><path d="M61 0 L88 27" fill="none" stroke="#8a8a8a" stroke-width="1.5"/><defs><linearGradient id="ph6_34" x1="0" y1="0" x2="0.354" y2="1.008"><stop offset="0" stop-color="#1c8ae2"/><stop offset="0.28" stop-color="#2c76d0"/><stop offset="0.55" stop-color="#4c5abd"/><stop offset="0.85" stop-color="#7058c2"/><stop offset="1" stop-color="#7a5cc6"/></linearGradient><linearGradient id="pm6_34" gradientUnits="userSpaceOnUse" x1="10" y1="30" x2="26" y2="46"><stop offset="0" stop-color="#40d2fd"/><stop offset="0.6" stop-color="#30bbf5"/><stop offset="1" stop-color="#27a8ee"/></linearGradient><linearGradient id="pn6_34" gradientUnits="userSpaceOnUse" x1="24" y1="44" x2="50" y2="52"><stop offset="0" stop-color="#1374cf"/><stop offset="0.5" stop-color="#1880da"/><stop offset="1" stop-color="#2194e6"/></linearGradient><clipPath id="pc6_34"><rect x="15.5" y="31.5" width="57" height="57" rx="7"/></clipPath></defs><g clip-path="url(#pc6_34)"><rect x="15.5" y="31.5" width="57" height="57" fill="url(#ph6_34)"/><g transform="translate(15.5 31.5)"><path d="M-2 46.5 L21.2 23.3 A8.3 8.3 0 0 1 32.9 23.3 L60 50.4 V60 H-2 Z" fill="url(#pm6_34)"/><path d="M6.4 60 L33.6 32.8 A6 6 0 0 1 42 32.6 L60 50.4 V60 Z" fill="#1260b4" opacity="0.3"/><path d="M8.2 60 L34.7 33.5 A6 6 0 0 1 43.1 33.5 L60 50.4 V60 Z" fill="url(#pn6_34)"/><circle cx="42" cy="11.8" r="5.5" fill="#e6e7ec"/><circle cx="41.3" cy="11" r="4.2" fill="#f6f6f8"/><circle cx="40.8" cy="10.6" r="2.6" fill="#fdfdfe"/></g></g></g></svg><span class="t" id="t30" style="left:1129.00px;top:245.80px;font-size:13.0px;color:#fff;transform:scaleX(0.9184);">wallpaperflare.com_wallp</span><span class="t" id="t31" style="left:1175.93px;top:260.80px;font-size:13.0px;color:#fff;transform:scaleX(0.8886);">aper (2)</span></div>
</main>
<div class="g" role="tooltip"><div class="a" id="tip"></div><span class="t" id="t32" style="left:366.38px;top:173.80px;font-size:11.5px;color:#fff;transform:scaleX(1.0517);-webkit-text-stroke:0.12px currentColor;">Delete (Delete)</span></div>
<div class="g" role="menu" aria-label="Context menu">
<div class="a" id="menu"><div class="a" id="mtop"></div><div class="a" id="delbtn"></div><div class="a msep" style="top:47px;left:0;width:278px;background:linear-gradient(90deg,#46391b,#3f3a2c 25%,#3d3d3d 45%)"></div><div class="a msep" style="top:279px"></div><div class="a msep" style="top:384px"></div></div>
<div class="g" role="button" aria-label="Cut"><svg class="a" style="left:269px;top:213px" width="24" height="24" viewBox="0 0 24 24"><g transform="translate(12 12.8) scale(0.98)"><path d="M-4.7 -7.4 L2.3 3.2 M4.7 -7.4 L-2.3 3.2" fill="none" stroke="#dcdcdc" stroke-width="1.1" stroke-linecap="round" stroke-linejoin="round" /><circle cx="-4" cy="5.2" r="2.5" fill="none" stroke="#4cc2ff" stroke-width="1.15"/><circle cx="4" cy="5.2" r="2.5" fill="none" stroke="#4cc2ff" stroke-width="1.15"/></g></svg></div>
<div class="g" role="button" aria-label="Copy"><svg class="a" style="left:309px;top:213px" width="24" height="24" viewBox="0 0 24 24"><g transform="translate(12 12.8) scale(0.98)"><path d="M-5.6 -4.8 V5.2 A2.4 2.4 0 0 0 -3.2 7.6 H2.8" fill="none" stroke="#e0e0e0" stroke-width="1.1" stroke-linecap="round" stroke-linejoin="round" /><rect x="-3.5" y="-7.5" width="9" height="13" rx="2" fill="none" stroke="#4cc2ff" stroke-width="1.15"/></g></svg></div>
<div class="g" role="button" aria-label="Rename"><svg class="a" style="left:349px;top:213px" width="24" height="24" viewBox="0 0 24 24"><g transform="translate(12 12.8) scale(0.98)"><path d="M0.6 -5.5 H-5.5 A2 2 0 0 0 -7.5 -3.5 V3.5 A2 2 0 0 0 -5.5 5.5 H0.6 M4 -5.5 H5.7 A2 2 0 0 1 7.7 -3.5 V3.5 A2 2 0 0 1 5.7 5.5 H4" fill="none" stroke="#e0e0e0" stroke-width="1.15" stroke-linecap="round" stroke-linejoin="round" /><path d="M-5 0 H0.4" fill="none" stroke="#4cc2ff" stroke-width="1.9" stroke-linecap="round" stroke-linejoin="round" stroke-linecap="butt"/><path d="M2.3 -7.6 V7.6 M0.2 -7.7 H4.5 M0.2 7.7 H4.5" fill="none" stroke="#4cc2ff" stroke-width="1.25" stroke-linecap="round" stroke-linejoin="round" /></g></svg></div>
<div class="g" role="button" aria-label="Delete"><svg class="a" style="left:389px;top:213px" width="24" height="24" viewBox="0 0 24 24"><g transform="translate(12 12.8) scale(0.98)"><path d="M-6.8 -5.2 H6.8 M-1.9 -5.4 A1.9 1.9 0 0 1 1.9 -5.4" fill="none" stroke="#c8c8c8" stroke-width="1.1" stroke-linecap="round" stroke-linejoin="round" /><path d="M-5.9 -5 L-4.7 6.2 A1.4 1.4 0 0 0 -3.3 7.5 H3.3 A1.4 1.4 0 0 0 4.7 6.2 L5.9 -5" fill="none" stroke="#c8c8c8" stroke-width="1.1" stroke-linecap="round" stroke-linejoin="round" /><path d="M-1.4 -1.6 V4 M1.4 -1.6 V4" fill="none" stroke="#c8c8c8" stroke-width="1.05" stroke-linecap="round" stroke-linejoin="round" /></g></svg></div>
<div class="g" role="menuitem"><svg class="a" style="left:272px;top:260px" width="19" height="18" viewBox="0 0 19 18"><g transform="translate(0.3 0.8)"><path d="M0.6 2.6 A1.2 1.2 0 0 1 1.8 1.4 H5.8 L7.6 3.2 H15.6 A1.2 1.2 0 0 1 16.8 4.4 V14 A1.2 1.2 0 0 1 15.6 15.2 H1.8 A1.2 1.2 0 0 1 0.6 14 Z" fill="#e9a422"/><path d="M0.6 5.8 H16.8 V14 A1.2 1.2 0 0 1 15.6 15.2 H1.8 A1.2 1.2 0 0 1 0.6 14 Z" fill="#ffd456"/><rect x="1.6" y="3.8" width="4.4" height="0.9" fill="#c28a14"/><path d="M4.4 11 A1 1 0 0 1 5.4 10 H12.2 A1 1 0 0 1 13.2 11 V15.2 H4.4 Z" fill="#1b7fd6"/><rect x="6.6" y="12.2" width="4.4" height="1.1" fill="#7cc6ff"/></g></svg><span class="t" id="t33" style="left:299.69px;top:258.80px;font-size:14px;color:#f4f4f4;transform:scaleX(0.9947);-webkit-text-stroke:0.12px currentColor;">Open</span><span class="t" id="t34" style="left:467.48px;top:259.80px;font-size:11.5px;color:#cbcbcb;transform:scaleX(1.0298);-webkit-text-stroke:0.12px currentColor;">Enter</span></div>
<div class="g" role="menuitem"><svg class="a" style="left:272px;top:293px" width="18" height="17" viewBox="0 0 18 17"><g transform="translate(0.8 0.2)"><path d="M7.6 3.2 H4 A2.2 2.2 0 0 0 1.8 5.4 V12.2 A2.2 2.2 0 0 0 4 14.4 H11.2 A2.2 2.2 0 0 0 13.4 12.2 V9" fill="none" stroke="#dadada" stroke-width="1.05" stroke-linecap="round" stroke-linejoin="round" /><path d="M7.8 8.6 L14.6 1.8 M10.2 1.5 H14.9 V6.2" fill="none" stroke="#4cc2ff" stroke-width="1.1" stroke-linecap="round" stroke-linejoin="round" /></g></svg><span class="t" id="t35" style="left:299.58px;top:290.80px;font-size:14px;color:#f4f4f4;transform:scaleX(1.0063);-webkit-text-stroke:0.12px currentColor;">Open in new window</span></div>
<div class="g" role="menuitem"><svg class="a" style="left:272px;top:324px" width="18" height="18" viewBox="0 0 18 18"><g transform="translate(0.7 0.7)"><polygon points="8.40,1.40 10.57,6.01 15.63,6.65 11.92,10.14 12.87,15.15 8.40,12.70 3.93,15.15 4.88,10.14 1.17,6.65 6.23,6.01" fill="none" stroke="#4cc2ff" stroke-width="1.1" stroke-linejoin="round"/></g></svg><span class="t" id="t36" style="left:300.09px;top:322.80px;font-size:14px;color:#f4f4f4;transform:scaleX(0.9630);-webkit-text-stroke:0.12px currentColor;">Pin to Quick access</span></div>
<div class="g" role="menuitem"><svg class="a" style="left:272px;top:356px" width="18" height="19" viewBox="0 0 18 19"><g transform="translate(0.9 0.1)"><path d="M1 16.6 L5.6 12" fill="none" stroke="#dadada" stroke-width="1.05" stroke-linecap="round" stroke-linejoin="round" /><path d="M9.6 1.4 L15.8 7.6 L14.2 8.4 C13.4 8.8 12.8 9.6 12.6 10.4 L11.6 13.8 L9.4 15.4 L2.2 8.2 L3.8 6 L7.2 5 C8 4.8 8.8 4.2 9.2 3.4 Z" fill="none" stroke="#4cc2ff" stroke-width="1.1" stroke-linecap="round" stroke-linejoin="round" /></g></svg><span class="t" id="t37" style="left:300.09px;top:354.80px;font-size:14px;color:#f4f4f4;transform:scaleX(0.9813);-webkit-text-stroke:0.12px currentColor;">Pin to Start</span></div>
<div class="g" role="menuitem"><svg class="a" style="left:272px;top:388px" width="17" height="17" viewBox="0 0 17 17"><path d="M1.4 4 A1.6 1.6 0 0 1 3 2.4 H6.4 L8.4 4.4 H14.6 A1.6 1.6 0 0 1 16.2 6 V14 A1.6 1.6 0 0 1 14.6 15.6 H3 A1.6 1.6 0 0 1 1.4 14 Z M1.4 6.6 H6.4 L8.4 4.4" fill="none" stroke="#dadada" stroke-width="1.05" stroke-linecap="round" stroke-linejoin="round" /><path d="M12.4 4.6 V15.4 M11.4 5.4 H13.4 M11.4 7.6 H12.4 M12.4 9.4 H13.4 M11.4 11.2 H12.4 M12.4 13 H13.4" fill="none" stroke="#4cc2ff" stroke-width="1.1" stroke-linecap="round" stroke-linejoin="round" /></svg><span class="t" id="t38" style="left:299.91px;top:386.80px;font-size:14px;color:#f4f4f4;transform:scaleX(0.9838);-webkit-text-stroke:0.12px currentColor;">Compress to ZIP file</span></div>
<div class="g" role="menuitem"><svg class="a" style="left:272px;top:421px" width="17" height="17" viewBox="0 0 17 17"><rect x="1.5" y="2.5" width="15" height="10.8" rx="2" fill="none" stroke="#dadada" stroke-width="1.05"/><path d="M3.8 4.8 L6 11 M6.6 4.8 L8.8 11" fill="none" stroke="#4cc2ff" stroke-width="1.1" stroke-linecap="round" stroke-linejoin="round" /><rect x="10.2" y="10" width="1.2" height="1.2" fill="#4cc2ff"/><rect x="12.6" y="10" width="1.2" height="1.2" fill="#4cc2ff"/></svg><span class="t" id="t39" style="left:299.59px;top:418.80px;font-size:14px;color:#f4f4f4;transform:scaleX(0.9868);-webkit-text-stroke:0.12px currentColor;">Copy as path</span></div>
<div class="g" role="menuitem"><svg class="a" style="left:272px;top:452px" width="18" height="19" viewBox="0 0 18 19"><g transform="translate(0 0.6)"><rect x="3.4" y="1.4" width="11" height="15" rx="1.8" fill="none" stroke="#dadada" stroke-width="1.05"/><circle cx="6.6" cy="6.4" r="1.1" fill="none" stroke="#4cc2ff" stroke-width="0.9"/><circle cx="6.6" cy="11.4" r="1.1" fill="none" stroke="#4cc2ff" stroke-width="0.9"/><path d="M9.2 6.4 H12.2 M9.2 11.4 H12.2" fill="none" stroke="#4cc2ff" stroke-width="1.1" stroke-linecap="round" stroke-linejoin="round" /></g></svg><span class="t" id="t40" style="left:300.09px;top:450.80px;font-size:14px;color:#f4f4f4;transform:scaleX(0.9847);-webkit-text-stroke:0.12px currentColor;">Properties</span><span class="t" id="t41" style="left:467.48px;top:451.80px;font-size:11.5px;color:#cbcbcb;transform:scaleX(1.0708);-webkit-text-stroke:0.12px currentColor;">Alt+Enter</span></div>
<div class="g" role="menuitem"><svg class="a" style="left:272px;top:494px" width="18" height="16" viewBox="0 0 18 16"><rect x="1" y="1.8" width="16" height="12.1" rx="0.5" fill="#3b3b3b"/><rect x="1" y="1.8" width="16" height="1.9" fill="#6a6a6a"/><rect x="6" y="1.8" width="6" height="1.9" fill="#b4b4b4"/><rect x="1" y="1.8" width="5" height="1.9" fill="#f0f0f0"/><path d="M3 5.8 L6.2 8.4 L3 11" fill="none" stroke="#f4f4f4" stroke-width="1.3" stroke-linecap="round" stroke-linejoin="round" stroke-linejoin="miter"/><rect x="8" y="10" width="5" height="1.4" fill="#f4f4f4"/></svg><span class="t" id="t42" style="left:299.63px;top:491.80px;font-size:14px;color:#f4f4f4;transform:scaleX(1.0036);-webkit-text-stroke:0.12px currentColor;">Open in Terminal</span></div>
<div class="g" role="menuitem"><svg class="a" style="left:272px;top:526px" width="17" height="18" viewBox="0 0 17 18"><rect x="1.8" y="5" width="13" height="7" rx="0.8" fill="#1b80da"/><rect x="3" y="6.4" width="7.4" height="4.2" fill="#2a8be0" opacity="0.6"/><path d="M11.4 2.4 V14.6 M9 2.2 H13.8 M9 14.8 H13.8" fill="none" stroke="#3ab4f4" stroke-width="1.4" stroke-linecap="round" stroke-linejoin="round" stroke-linecap="butt"/></svg><span class="t" id="t43" style="left:300.09px;top:523.80px;font-size:14px;color:#f4f4f4;transform:scaleX(0.9500);-webkit-text-stroke:0.12px currentColor;">PowerRename</span></div>
<div class="g" role="menuitem"><svg class="a" style="left:272px;top:556px" width="19" height="18" viewBox="0 0 19 18"><g transform="translate(0 0.1)"><rect x="0.9" y="1.7" width="16.4" height="4.6" rx="0.4" fill="#d0403c"/><rect x="0.9" y="6.7" width="16.4" height="4.6" rx="0.4" fill="#5d63c6"/><rect x="0.9" y="11.7" width="16.4" height="4.6" rx="0.4" fill="#2f9b44"/><rect x="2" y="2.6" width="1.4" height="3" fill="#f2b63c"/><rect x="2" y="7.6" width="1.4" height="3" fill="#f2b63c"/><rect x="2" y="12.6" width="1.4" height="3" fill="#e8d63a"/><rect x="6.6" y="1.5" width="5.2" height="15" fill="#c63a30"/><rect x="7.8" y="2" width="2.8" height="3.8" fill="#f2b04a"/><rect x="8.6" y="2.8" width="1.2" height="2.2" fill="#c63a30"/><rect x="6.9" y="6.4" width="4.6" height="5" fill="#f5f5f5"/><rect x="8.6" y="7.8" width="1.2" height="2.6" fill="#b83a32"/><rect x="7.8" y="12.2" width="2.8" height="3.6" fill="#e47a3c"/></g></svg><span class="t" id="t44" style="left:300.38px;top:555.80px;font-size:14px;color:#f4f4f4;transform:scaleX(0.9376);-webkit-text-stroke:0.12px currentColor;">WinRAR</span><svg class="a" style="left:505px;top:558px" width="16" height="16" viewBox="0 0 16 16"><g transform="translate(8 8)"><path d="M-2.6 -5 L2.6 0 L-2.6 5" fill="none" stroke="#c0c0c0" stroke-width="1.1" stroke-linecap="round" stroke-linejoin="round" /></g></svg></div>
<div class="g" role="menuitem"><svg class="a" style="left:272px;top:599px" width="18" height="18" viewBox="0 0 18 18"><path d="M7.4 2.5 H4.2 A2 2 0 0 0 2.2 4.5 V12.4 A2 2 0 0 0 4.2 14.4 H13.8 A2 2 0 0 0 15.8 12.4 V10" fill="none" stroke="#dadada" stroke-width="1.05" stroke-linecap="round" stroke-linejoin="round" /><path d="M2.2 8.8 H8.4 V14.4" fill="none" stroke="#dadada" stroke-width="1.05" stroke-linecap="round" stroke-linejoin="round" /><path d="M10 6.8 L15.8 2.6 M15.9 6.4 V2.5 H12" fill="none" stroke="#4cc2ff" stroke-width="1.1" stroke-linecap="round" stroke-linejoin="round" /></svg><span class="t" id="t45" style="left:299.62px;top:596.80px;font-size:14px;color:#f4f4f4;transform:scaleX(1.0111);-webkit-text-stroke:0.12px currentColor;">Show more options</span><span class="t" id="t46" style="left:466.76px;top:597.80px;font-size:11.5px;color:#cbcbcb;transform:scaleX(1.0249);-webkit-text-stroke:0.12px currentColor;">Shift+F10</span></div>
</div>

</div></body></html>
